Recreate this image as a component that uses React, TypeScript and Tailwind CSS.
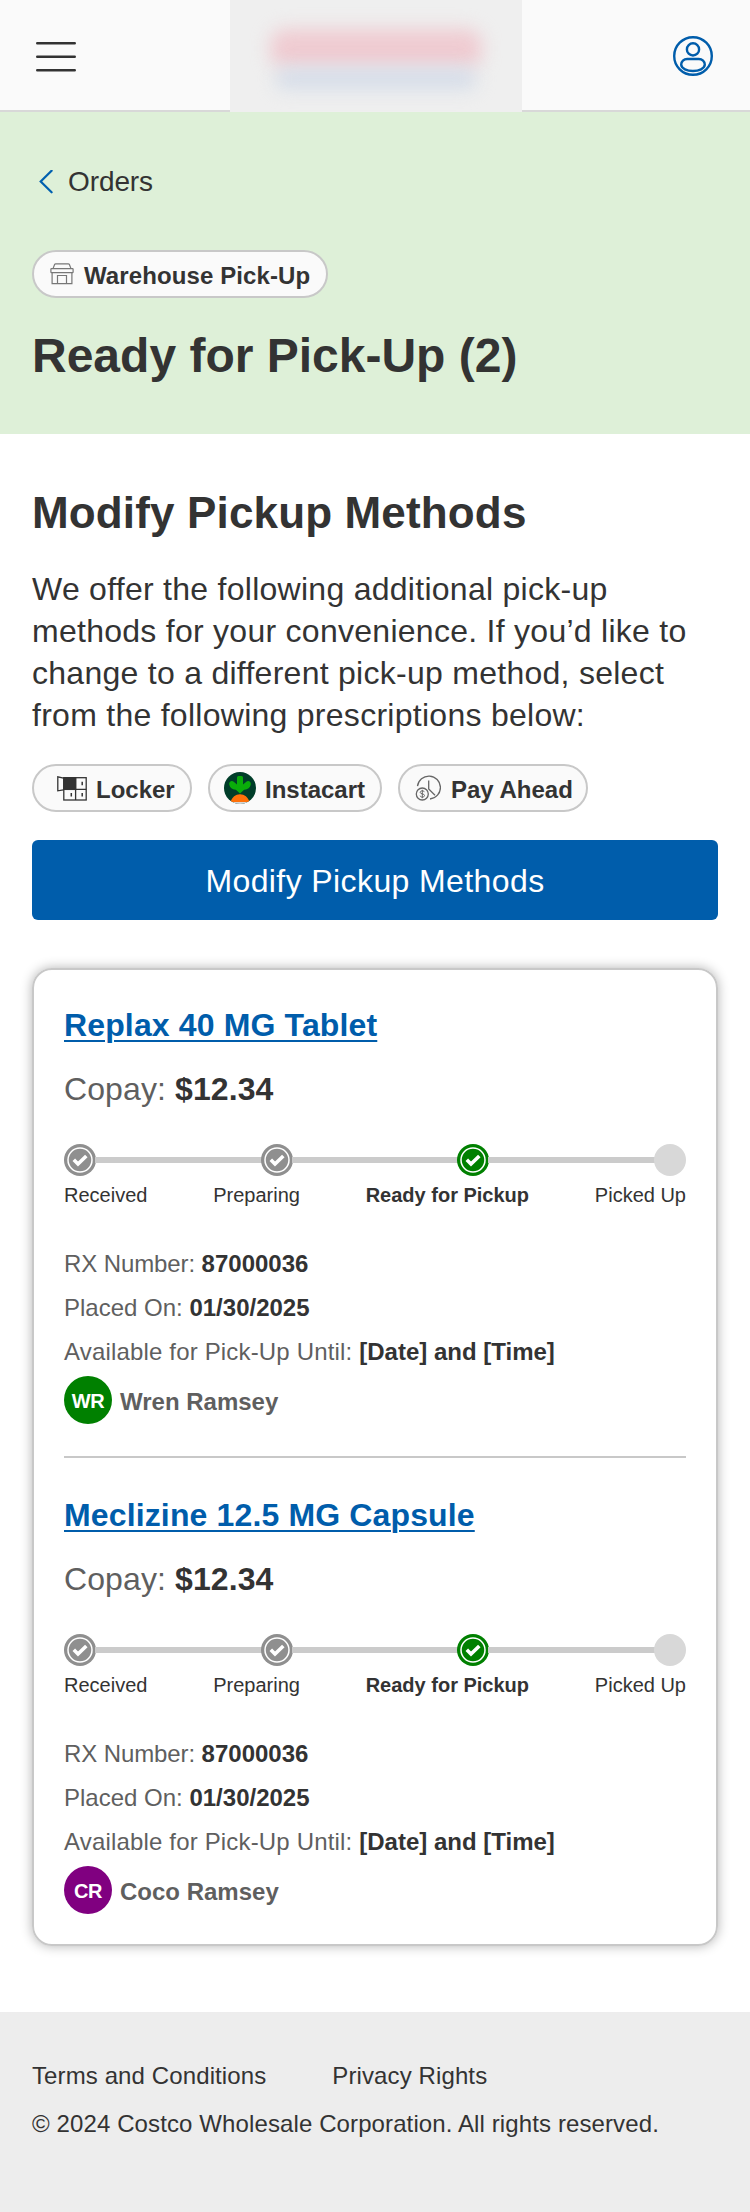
import type { ReactNode } from 'react';

interface Prescription {
  name: string;
  copay: string;
  rxNumber: string;
  placedOn: string;
  availableUntil: string;
  member: string;
  initials: string;
  avatarClass: string;
}

type StepStatus = 'done' | 'current' | 'pending';

const steps: { label: string; status: StepStatus }[] = [
  { label: 'Received', status: 'done' },
  { label: 'Preparing', status: 'done' },
  { label: 'Ready for Pickup', status: 'current' },
  { label: 'Picked Up', status: 'pending' },
];

const prescriptions: Prescription[] = [
  {
    name: 'Replax 40 MG Tablet',
    copay: '$12.34',
    rxNumber: '87000036',
    placedOn: '01/30/2025',
    availableUntil: '[Date] and [Time]',
    member: 'Wren Ramsey',
    initials: 'WR',
    avatarClass: 'bg-[#008000]',
  },
  {
    name: 'Meclizine 12.5 MG Capsule',
    copay: '$12.34',
    rxNumber: '87000036',
    placedOn: '01/30/2025',
    availableUntil: '[Date] and [Time]',
    member: 'Coco Ramsey',
    initials: 'CR',
    avatarClass: 'bg-[#800080]',
  },
];

function MenuIcon() {
  return (
    <svg width="40" height="32" viewBox="0 0 40 32" stroke="#333" strokeWidth="2.6" strokeLinecap="round">
      <path d="M1.3 3.3h37.4M1.3 16.8h37.4M1.3 30.2h37.4" />
    </svg>
  );
}

function AccountIcon() {
  return (
    <svg width="40" height="40" viewBox="0 0 40 40" fill="none" stroke="#005dab" strokeWidth="2.4">
      <circle cx="20" cy="20" r="18.8" />
      <circle cx="20" cy="13.4" r="6.1" />
      <path d="M14.2 23h11.6c3.4 0 6 2.5 6 5.6 0 4-6 6.4-11.8 6.4S8.2 32.6 8.2 28.6c0-3.1 2.6-5.6 6-5.6z" />
    </svg>
  );
}

function StoreIcon() {
  return (
    <svg width="24" height="22" viewBox="0 0 24 22" fill="none" stroke="#777" strokeWidth="1.2">
      <path d="M3 5.6 4.6 1.6Q4.900.9 5.7.9H18.3Q19.100.9 19.4 1.6L21 5.6" />
      <rect x=".9" y="5.6" width="22.2" height="4" rx=".6" />
      <path d="M2.1 9.6V20.7H21.9V9.6M7.5 20.7V12.5H16.5V20.7" />
    </svg>
  );
}

function LockerIcon() {
  return (
    <svg width="30" height="25" viewBox="0 0 30 25" fill="none" stroke="#333" strokeWidth="1.3">
      <path d="M6.500 2.2.8.8V14.8L6.5 13.8" />
      <rect x="6.8" y="1.7" width="22.4" height="22.3" />
      <path d="M18.6 1.7V24M6.8 13.4H29.2" />
      <rect x="6.8" y="1.7" width="11.8" height="11.7" fill="#333" />
      <path d="M25.2 5.8V9.2M14.3 17V20.5M25.2 17V20.5" strokeWidth="1.5" />
    </svg>
  );
}

function InstacartIcon() {
  return (
    <svg width="32" height="32" viewBox="0 0 32 32">
      <clipPath id="instacart-circle">
        <circle cx="16" cy="16" r="16" />
      </clipPath>
      <g clipPath="url(#instacart-circle)">
        <rect width="32" height="32" fill="#003d29" />
        <path
          d="M16 21.6 11.9 17.7C8.6 17.9 5.900 16 5.200 12.600 4.700 9.500 7.900 8 10 9.900L13 12.600V5.500Q13 4 14.500 4H17.500Q19 4 19 5.500V12.600L22 9.900C24.100 8 27.300 9.500 26.800 12.600 26.100 16 23.400 17.900 20.100 17.700Z"
          fill="#0aad0a"
        />
        <rect y="30" width="32" height="2" fill="#d5d5d5" />
        <path d="M6.500 30C8 25 11.500 22.200 16 22.200S24 25 25.500 30Z" fill="#ff7009" />
      </g>
    </svg>
  );
}

function PayAheadIcon() {
  return (
    <svg width="26" height="26" viewBox="0 0 26 26" fill="none" stroke="#666" strokeWidth="1.3">
      <path d="M2.5 11.2A11.5 11.5 0 1 1 15 24" />
      <path d="M13.7 5.500V14L20 20.200" />
      <circle cx="7.3" cy="19" r="6" />
      <path
        d="M9.4 17.1C9 16.1 8.3 15.9 7.3 15.9 6 15.900 5.200 16.500 5.200 17.400 5.200 19.400 9.500 18.400 9.500 20.500 9.500 21.500 8.600 22.100 7.300 22.100 6.200 22.100 5.400 21.700 5.100 20.700M7.300 14.800V23.200"
        strokeWidth="1"
      />
    </svg>
  );
}

function StepIcon({ status }: { status: StepStatus }) {
  if (status === 'pending') {
    return <div className="size-8 rounded-full bg-[#d8d8d8]" />;
  }
  const color = status === 'current' ? '#008000' : '#8f8f8f';

  return (
    <svg width="32" height="32" viewBox="0 0 32 32" fill="none">
      <circle cx="16" cy="16" r="16" fill={color} />
      <circle cx="16" cy="16" r="12" stroke="#fff" strokeWidth="1.5" />
      <path d="M9.8 15.8 14 20 22.300 12" stroke="#fff" strokeWidth="3.600" />
    </svg>
  );
}

function Chip({ icon, label, className }: { icon: ReactNode; label: string; className: string }) {
  return (
    <div
      className={`flex h-12 items-center rounded-full border-2 border-[#c8c8c8] bg-[#fafafa] text-2xl font-bold whitespace-nowrap ${className}`}
    >
      {icon}
      <span className="pt-[3px] leading-none">{label}</span>
    </div>
  );
}

function Stepper() {
  return (
    <div className="mt-[35px]">
      <div className="flex items-center">
        {steps.map((step, idx) => (
          <div key={step.label} className={idx ? 'flex flex-1 items-center' : 'flex items-center'}>
            {idx > 0 && <div className="-mx-px h-1.5 flex-1 bg-[#cbcbcb]" />}
            <StepIcon status={step.status} />
          </div>
        ))}
      </div>
      <div className="mt-[7px] flex justify-between text-xl leading-6">
        {steps.map((step) => (
          <span key={step.label} className={step.status === 'current' ? 'font-bold' : ''}>
            {step.label}
          </span>
        ))}
      </div>
    </div>
  );
}

function Detail({ label, value, className = '' }: { label: string; value: string; className?: string }) {
  return (
    <p className="leading-[44px] text-[#5f5f5f]">
      <span className={className}>{label}: </span>
      <b className="text-[#333]">{value}</b>
    </p>
  );
}

function PrescriptionItem({ item }: { item: Prescription }) {
  return (
    <article>
      <h3 className="text-[32px] leading-10 font-bold tracking-[0.14px]">
        <a href="#" className="text-[#005dab] underline decoration-2 underline-offset-4">
          {item.name}
        </a>
      </h3>
      <p className="mt-6 text-[32px] leading-10 tracking-[0.1px] text-[#5f5f5f]">
        Copay: <b className="text-[#333]">{item.copay}</b>
      </p>
      <Stepper />
      <div className="mt-[35px] text-2xl">
        <Detail label="RX Number" value={item.rxNumber} className="tracking-[-0.1px]" />
        <Detail label="Placed On" value={item.placedOn} />
        <Detail label="Available for Pick-Up Until" value={item.availableUntil} className="tracking-[0.17px]" />
      </div>
      <div className="mt-0.5 flex items-center gap-2">
        <span
          className={`flex size-12 items-center justify-center rounded-full pt-px text-xl font-bold tracking-[-0.5px] text-white ${item.avatarClass}`}
        >
          {item.initials}
        </span>
        <span className="pt-[3px] text-2xl font-bold text-[#5f5f5f]">{item.member}</span>
      </div>
    </article>
  );
}

export default function App() {
  return (
    <div className="flex h-[2212px] w-[750px] flex-col bg-white font-['Liberation_Sans',Arial,sans-serif] text-[#333]">
      <header className="flex h-28 bg-[#fafafa]">
        <div className="flex w-[230px] items-center border-b-2 border-[#d8d8d8] pt-0.5 pl-9">
          <MenuIcon />
        </div>
        <div className="flex w-[292px] flex-col items-center overflow-hidden bg-[#efefef] pt-[29px]">
          <div className="h-[39px] w-[212px] rounded-2xl bg-[#efcbd1] blur-[9px]" />
          <div className="h-[21px] w-[200px] rounded-lg bg-[#d5dde9] blur-[9px]" />
        </div>
        <div className="flex flex-1 items-center justify-end border-b-2 border-[#d8d8d8] pt-0.5 pr-[37px]">
          <AccountIcon />
        </div>
      </header>

      <section className="h-[322px] bg-[#def0d8] px-8 pt-[50px]">
        <a href="#" className="flex h-10 items-center pl-[7px] text-[28px] tracking-[-0.1px]">
          <svg
            width="14"
            height="24"
            viewBox="0 0 14 24"
            fill="none"
            stroke="#0060af"
            strokeWidth="2.2"
            strokeLinecap="round"
          >
            <path d="M12.6 .7 1.7 11.500 12.600 22.300" />
          </svg>
          <span className="pl-[15px]">Orders</span>
        </a>
        <div className="mt-12 flex">
          <Chip icon={<StoreIcon />} label="Warehouse Pick-Up" className="w-[296px] gap-2.5 pl-4 tracking-[0.1px]" />
        </div>
        <h1 className="mt-[30px] text-5xl leading-[56px] font-bold">Ready for Pick-Up (2)</h1>
      </section>

      <main className="px-8 pt-[53px]">
        <h2 className="text-[44px] leading-[52px] font-bold tracking-[0.15px]">Modify Pickup Methods</h2>
        <p className="mt-[29px] text-[32px] leading-[42px] tracking-[0.27px]">
          We offer the following additional pick-up
          <br />
          methods for your convenience. If you’d like to
          <br />
          change to a different pick-up method, select
          <br />
          from the following prescriptions below:
        </p>
        <div className="mt-7 flex gap-4">
          <Chip icon={<LockerIcon />} label="Locker" className="w-40 gap-[9px] pl-[23px]" />
          <Chip icon={<InstacartIcon />} label="Instacart" className="w-[174px] gap-[9px] pl-3.5" />
          <Chip icon={<PayAheadIcon />} label="Pay Ahead" className="w-[190px] gap-2.5 pl-[15px]" />
        </div>
        <button
          type="button"
          className="mt-7 flex h-20 w-full items-center justify-center rounded-md bg-[#005dab] pt-0.5 text-[32px] tracking-[0.4px] text-white"
        >
          Modify Pickup Methods
        </button>

        <div className="mt-12 rounded-[20px] border-2 border-[#c8c8c8] px-[30px] pt-[35px] pb-[30px] shadow-[0_0_12px_rgba(0,0,0,0.3)]">
          {prescriptions.map((item, idx) => (
            <div key={item.name}>
              {idx > 0 && <hr className="mt-8 mb-[37px] border-t-2 border-[#c8c8c8]" />}
              <PrescriptionItem item={item} />
            </div>
          ))}
        </div>
      </main>

      <footer className="mt-[66px] flex-1 bg-[#ededed] px-8 pt-10 text-2xl leading-[48px] tracking-[0.11px]">
        <nav className="flex gap-[66px]">
          <a href="#">Terms and Conditions</a>
          <a href="#">Privacy Rights</a>
        </nav>
        <p>© 2024 Costco Wholesale Corporation. All rights reserved.</p>
      </footer>
    </div>
  );
}
